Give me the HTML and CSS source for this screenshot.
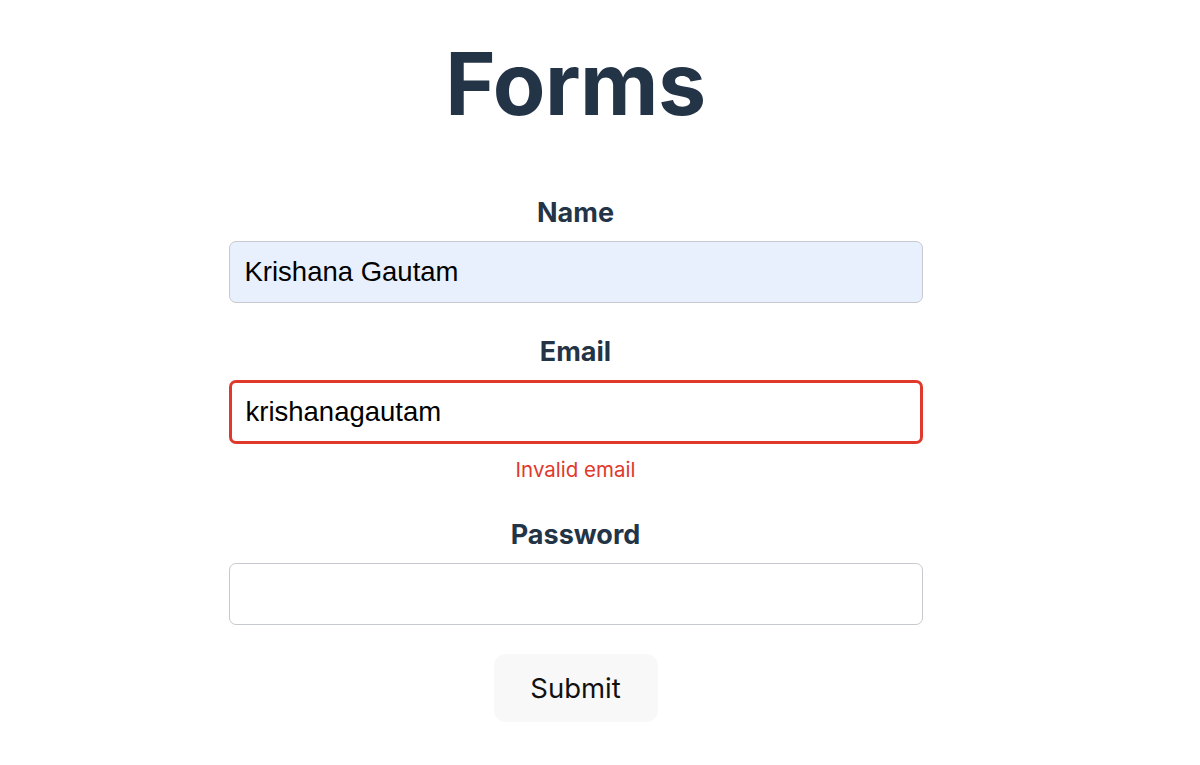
FILE: index.html
```html
<!DOCTYPE html>
<html>
<head>
<meta charset="utf-8">
<link rel="stylesheet" href="styles.css">
</head>
<body>
<div class="page">
  <h1 class="title">Forms</h1>
  <form class="form">
    <div class="field">
      <label class="label">Name</label>
      <input class="input autofill" type="text" value="Krishana Gautam">
    </div>
    <div class="field">
      <label class="label">Email</label>
      <input class="input invalid" type="text" value="krishanagautam">
      <div class="error">Invalid email</div>
    </div>
    <div class="field">
      <label class="label">Password</label>
      <input class="input" type="password" value="">
    </div>
    <button class="submit" type="button">Submit</button>
  </form>
</div>
</body>
</html>
```
FILE: styles.css
```css
html, body {
  margin: 0;
  padding: 0;
  background: #ffffff;
}
body {
  font-family: Inter, "Liberation Sans", sans-serif;
}
.page {
  width: 1151px;
  display: flex;
  flex-direction: column;
  align-items: center;
}
.title {
  margin: 32px 0 0 0;
  font-size: 86px;
  line-height: 104px;
  font-weight: 700;
  color: #243447;
  letter-spacing: -0.5px;
}
.form {
  width: 694px;
  margin-top: 61px;
  display: flex;
  flex-direction: column;
  align-items: center;
}
.field {
  width: 100%;
  display: flex;
  flex-direction: column;
  align-items: center;
  margin-bottom: 33px;
}
.label {
  font-size: 27px;
  line-height: 32px;
  font-weight: 700;
  color: #243447;
  margin-bottom: 12px;
}
.input {
  box-sizing: border-box;
  width: 100%;
  height: 62px;
  border: 1.5px solid #c6c9cd;
  border-radius: 7px;
  padding: 0 15px;
  font-family: "Liberation Sans", Arial, sans-serif;
  font-size: 27.5px;
  color: #000;
  background: #fff;
  outline: none;
}
.input.autofill {
  background: #e8f0fe;
}
.input.invalid {
  border: 3px solid #e0392b;
  height: 64px;
  padding: 0 14px;
}
.error {
  margin-top: 14px;
  font-size: 20.5px;
  line-height: 24px;
  color: #e0392b;
  margin-bottom: 4px;
}
.submit {
  margin-top: -4px;
  width: 164px;
  height: 68px;
  border: none;
  border-radius: 12px;
  background: #f8f8f8;
  font-family: Inter, "Liberation Sans", sans-serif;
  font-size: 27.5px;
  color: #111;
}
```
